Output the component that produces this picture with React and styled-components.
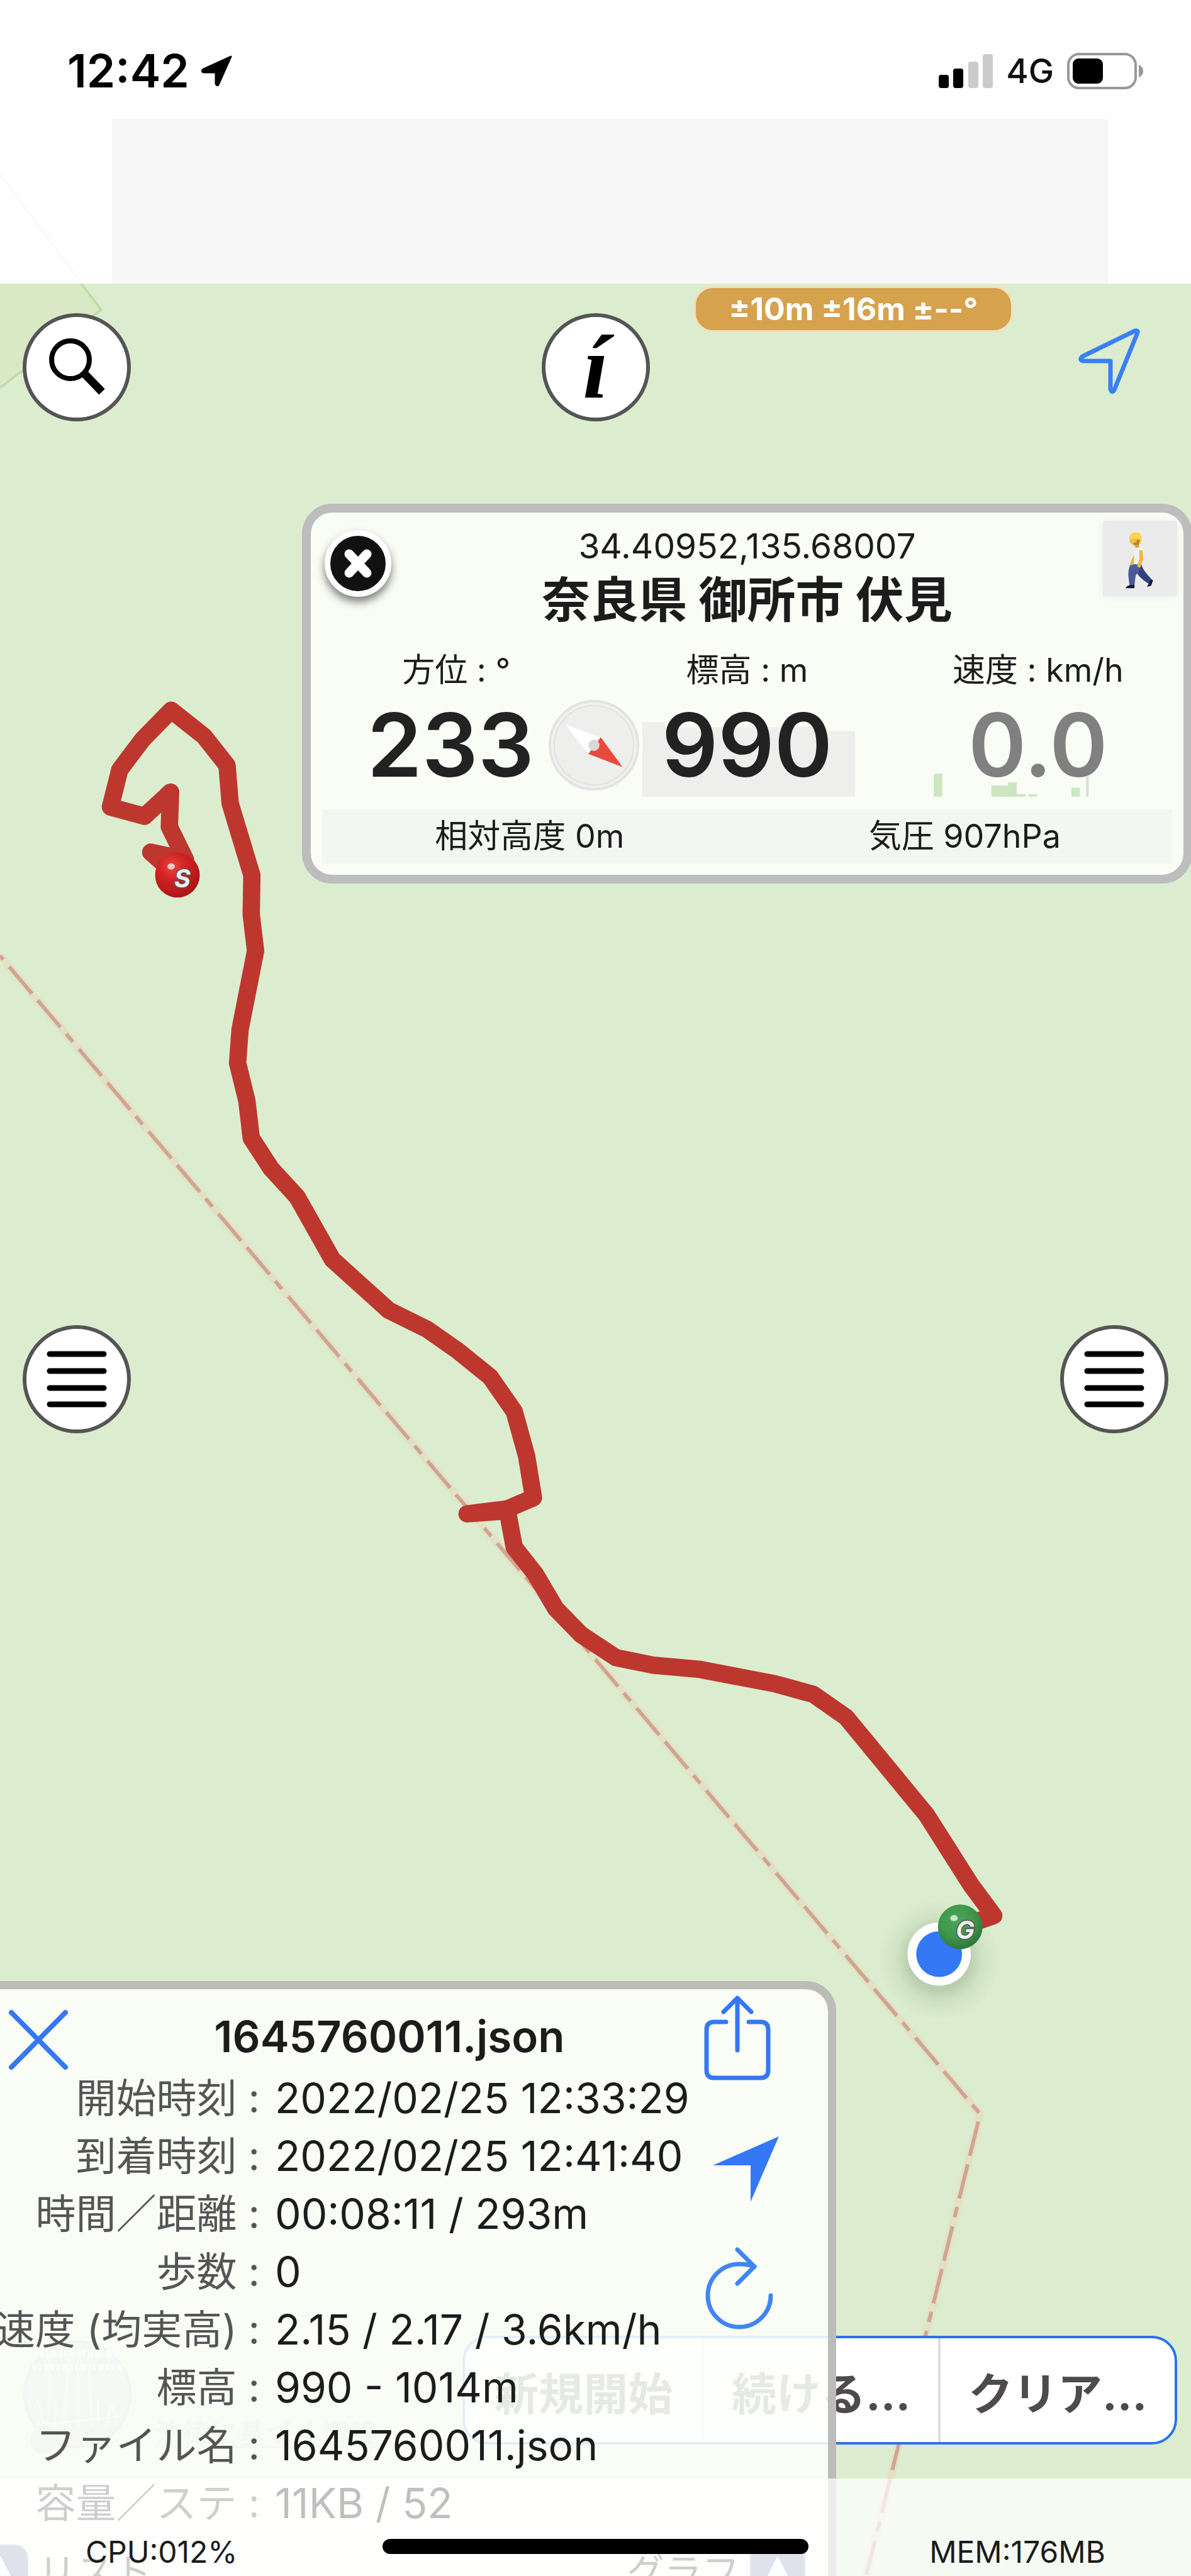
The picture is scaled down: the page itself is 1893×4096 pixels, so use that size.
import styled, { createGlobalStyle } from 'styled-components';

const GlobalStyle = createGlobalStyle`
  * {
    box-sizing: border-box;
  }
  body {
    margin: 0;
    background: #fefefe;
    font-family: Inter, "Noto Sans CJK JP", sans-serif;
    color: #1c1c1c;
  }
  button {
    font-family: inherit;
    padding: 0;
    border: 0;
    background: none;
    color: inherit;
    cursor: pointer;
  }
  svg {
    display: block;
  }
`;

const Screen = styled.div`
  display: flex;
  flex-direction: column;
  position: relative;
  height: 100vh;
  overflow: hidden;
`;

const StatusBar = styled.header`
  display: flex;
  flex: none;
  justify-content: space-between;
  align-items: center;
  height: 190px;
  padding: 36px 75px 0 107px;
`;

const StatusGroup = styled.div`
  display: flex;
  align-items: center;
  gap: ${(props) => props.$gap}px;
`;

const Clock = styled.time`
  font-size: 73px;
  font-weight: 600;
  line-height: 80px;
  color: #000;
`;

const Network = styled.span`
  font-size: 54px;
  font-weight: 500;
  line-height: 60px;
  color: #111;
`;

const HeaderLine = styled.svg`
  position: absolute;
  left: 0;
  top: 276px;
`;

const Banner = styled.div`
  flex: none;
  height: 260px;
  margin: 0 132px 1px 178px;
  background: #f6f6f6;
`;

const MapArea = styled.main`
  display: flex;
  flex: 1;
  flex-direction: column;
  position: relative;
  min-height: 0;
  overflow: hidden;
  background: #dcedcf;
`;

const MapCanvas = styled.svg`
  position: absolute;
  inset: 0;
  width: 100%;
  height: 100%;
`;

const TopControls = styled.div`
  display: grid;
  grid-template-columns: 1fr 172px 1fr;
  position: relative;
  padding: 47px 36px 0;
`;

const Accuracy = styled.div`
  position: absolute;
  top: 4px;
  left: calc(50% + 156px);
  padding: 0 53px;
  border: 3px solid #f4dfbb;
  border-radius: 30px;
  background: #d6a24e;
  color: #fff;
  font-size: 50px;
  font-weight: 700;
  line-height: 67px;
  white-space: nowrap;
`;

const RoundButton = styled.button`
  display: flex;
  align-items: center;
  justify-content: center;
  width: 172px;
  height: 172px;
  border: 6px solid #555;
  border-radius: 50%;
  background: #fff;
`;

const PlainButton = styled.button`
  justify-self: end;
  width: 172px;
  height: 172px;
`;

const InfoMark = styled.span`
  font-family: "Liberation Serif", serif;
  font-size: 144px;
  font-style: italic;
  font-weight: 700;
  line-height: 152px;
  color: #000;
`;

const InfoPanel = styled.section`
  position: relative;
  margin: 131px -2px 0 480px;
  padding: 20px 18px 18px;
  border: 14px solid #bdbdbd;
  border-radius: 48px;
  background: rgba(253, 255, 252, 0.88);
  background-clip: padding-box;
  text-align: center;
`;

const ClosePanel = styled.button`
  position: absolute;
  left: 22px;
  top: 28px;
  width: 106px;
  height: 106px;
  border: 9px solid #fff;
  border-radius: 50%;
  background: #111;
  box-shadow: 0 8px 14px rgba(0, 0, 0, 0.5);
  svg {
    margin: auto;
  }
`;

const WalkButton = styled.button`
  position: absolute;
  right: 10px;
  top: 13px;
  width: 118px;
  height: 120px;
  background: #ebebeb;
  box-shadow: 0 0 10px #ebebeb;
`;

const Coordinates = styled.div`
  font-size: 55px;
  line-height: 66px;
`;

const Place = styled.h1`
  margin: 0 0 24px;
  font-size: 77px;
  font-weight: 700;
  line-height: 106px;
`;

const Readings = styled.div`
  display: grid;
  grid-template-columns: repeat(3, 1fr);
  margin: 0 -18px 20px;
`;

const Reading = styled.div`
  position: relative;
`;

const ReadingLabel = styled.div`
  font-size: 52px;
  line-height: 70px;
`;

const ReadingValue = styled.div`
  position: relative;
  padding-right: ${(props) => props.$inset || 0}px;
  font-size: 140px;
  font-weight: 600;
  line-height: 166px;
  color: ${(props) => props.$color || '#222'};
`;

const Chart = styled.svg`
  position: absolute;
  bottom: 0;
  left: calc(50% - 166px);
`;

const Compass = styled.svg`
  position: absolute;
  right: -60px;
  bottom: 10px;
  z-index: 1;
`;

const PanelFooter = styled.div`
  display: grid;
  grid-template-columns: 1fr 1fr;
  column-gap: 32px;
  background: #f3f7f2;
  font-size: 52px;
  line-height: 86px;
`;

const SideControls = styled.div`
  display: flex;
  justify-content: space-between;
  position: relative;
  margin-top: 702px;
  padding: 0 36px;
`;

const Attribution = styled.div`
  position: absolute;
  left: 36px;
  bottom: 186px;
  display: flex;
  align-items: flex-end;
  svg {
    flex: none;
  }
`;

const Legal = styled.a`
  margin: 0 0 12px 36px;
  color: #c4c4c4;
  font-size: 44px;
  font-weight: 700;
  line-height: 56px;
`;

const Toolbar = styled.div`
  display: grid;
  grid-template-columns: repeat(3, 1fr);
  position: absolute;
  right: 22px;
  bottom: 209px;
  width: 60%;
  height: 173px;
  border: 4px solid #2a72ee;
  border-radius: 40px;
  background: #fff;
`;

const ToolbarButton = styled.button`
  font-size: 71px;
  font-weight: 700;
  color: #4f4a4c;
  & + & {
    border-left: 4px solid #ddd;
  }
`;

const TrackPanel = styled.section`
  position: relative;
  width: calc(75% + 1px);
  flex: none;
  margin: 871px 0 0 -92px;
  border: 13px solid #bcbcb9;
  border-radius: 48px;
  background: rgba(253, 255, 252, 0.88);
  background-clip: padding-box;
`;

const TrackHeader = styled.div`
  display: grid;
  grid-template-columns: 1fr auto 1fr;
  align-items: start;
  height: 127px;
  padding: 10px 91px 0 92px;
  > :last-child {
    justify-self: end;
  }
`;

const TrackTitle = styled.h2`
  margin: 0;
  font-size: 69px;
  font-weight: 600;
  line-height: 130px;
`;

const TrackBody = styled.div`
  display: flex;
  justify-content: space-between;
  padding-right: 75px;
`;

const TrackDetails = styled.dl`
  display: grid;
  grid-template-columns: 492px auto;
  column-gap: 24px;
  margin: 0;
  line-height: 92px;
  white-space: nowrap;
`;

const Term = styled.dt`
  text-align: right;
  font-size: 64px;
  color: #555;
`;

const Detail = styled.dd`
  margin: 0;
  font-size: 66px;
`;

const TrackActions = styled.div`
  display: flex;
  flex-direction: column;
  gap: 72px;
  width: 122px;
  padding-top: 107px;
`;

const TrackLinks = styled.div`
  display: flex;
  justify-content: space-between;
  margin-top: 14px;
  padding: 0 36px;
`;

const TrackLink = styled.button`
  display: flex;
  align-items: center;
  gap: 16px;
  color: #555;
  font-size: 60px;
  line-height: 100px;
`;

const Tile = styled.span`
  display: flex;
  align-items: center;
  justify-content: center;
  width: 88px;
  height: 88px;
  border: 3px solid #99a5c0;
  border-radius: 22px;
  background: #8b98b8;
`;

const BottomBar = styled.footer`
  display: grid;
  grid-template-columns: 1fr 677px 1fr;
  align-items: start;
  position: absolute;
  left: 0;
  right: 0;
  bottom: 0;
  height: 155px;
  padding-top: 85px;
  background: rgba(255, 255, 255, 0.72);
  font-size: 48px;
  line-height: 64px;
`;

const Usage = styled.span`
  justify-self: ${(props) => props.$side};
  padding: 0 136px;
`;

const HomeIndicator = styled.div`
  height: 24px;
  margin-top: 11px;
  border-radius: 12px;
  background: #000;
`;

const track = [
  [286, 1412], [243, 1374], [299, 1386], [273, 1333], [275, 1277], [233, 1316],
  [178, 1301], [193, 1241], [230, 1192], [276, 1145], [329, 1187], [366, 1234],
  [371, 1295], [406, 1411], [405, 1475], [412, 1533], [387, 1660], [383, 1714],
  [398, 1775], [405, 1835], [437, 1884], [479, 1930], [536, 2031], [627, 2113],
  [688, 2143], [738, 2178], [790, 2220], [829, 2276], [849, 2348], [860, 2415],
  [818, 2433], [753, 2441], [818, 2436], [829, 2495], [863, 2538], [896, 2594],
  [937, 2636], [993, 2673], [1053, 2685], [1129, 2692], [1249, 2715],
  [1311, 2732], [1364, 2769], [1494, 2927], [1565, 3039], [1602, 3089],
  [1550, 3107],
];

const details = [
  ['開始時刻', '2022/02/25 12:33:29'],
  ['到着時刻', '2022/02/25 12:41:40'],
  ['時間／距離', '00:08:11 / 293m'],
  ['歩数', '0'],
  ['速度 (均実高)', '2.15 / 2.17 / 3.6km/h'],
  ['標高', '990 - 1014m'],
  ['ファイル名', '1645760011.json'],
  ['容量／ステ', '11KB / 52'],
];

const Pin = ({ x, y, label, fill }) => (
  <g>
    <circle cx={x} cy={y} r="36" fill={`url(#${fill})`} />
    <ellipse cx={x - 10} cy={y - 14} rx="6" ry="5" fill="#fff" opacity="0.7" />
    <text
      x={x + 8}
      y={y + 20}
      textAnchor="middle"
      fontFamily="Inter, sans-serif"
      fontSize="40"
      fontWeight="700"
      fontStyle="italic"
      fill="#eee"
      stroke="#555"
      strokeWidth="3"
      paintOrder="stroke"
    >
      {label}
    </text>
  </g>
);

const Map = () => (
  <MapCanvas viewBox="0 457 1920 3698" preserveAspectRatio="xMidYMin slice">
    <defs>
      <radialGradient id="startPin" cx="0.38" cy="0.3" r="0.75">
        <stop offset="0" stopColor="#e8463f" />
        <stop offset="0.4" stopColor="#d32222" />
        <stop offset="1" stopColor="#a91318" />
      </radialGradient>
      <radialGradient id="goalPin" cx="0.42" cy="0.35" r="0.75">
        <stop offset="0" stopColor="#4aa457" />
        <stop offset="0.5" stopColor="#3f984b" />
        <stop offset="1" stopColor="#2a6b35" />
      </radialGradient>
      <radialGradient id="dotShadow">
        <stop offset="0.5" stopColor="#456040" stopOpacity="0.22" />
        <stop offset="0.7" stopColor="#456040" stopOpacity="0.08" />
        <stop offset="1" stopColor="#456040" stopOpacity="0" />
      </radialGradient>
    </defs>
    <path d="M0 457H131L163 499L0 625Z" fill="#d9e9c6" />
    <path d="M131 457L163 499L0 625" fill="none" stroke="#bfdca8" strokeWidth="4" />
    <g fill="none">
      <path d="M0 1541L1580 3409L1395 4160" stroke="#e6dcc0" strokeWidth="13" opacity="0.7" />
      <path
        d="M0 1541L1580 3409L1395 4160"
        stroke="#cfa591"
        strokeWidth="6"
        strokeDasharray="57 14 57 14 17 15"
        strokeDashoffset="151"
      />
    </g>
    <polyline
      points={track.join(' ')}
      fill="none"
      stroke="#bd372f"
      strokeWidth="28"
      strokeLinecap="round"
      strokeLinejoin="round"
    />
    <circle cx="1514" cy="3160" r="98" fill="url(#dotShadow)" />
    <circle cx="1514" cy="3151" r="51" fill="#fff" />
    <circle cx="1514" cy="3151" r="37" fill="#3478f6" />
    <Pin x={286} y={1411} label="S" fill="startPin" />
    <Pin x={1548} y={3107} label="G" fill="goalPin" />
  </MapCanvas>
);

const MenuButton = ({ label }) => (
  <RoundButton aria-label={label}>
    <svg width="96" height="92" viewBox="0 0 96 92" stroke="#000" strokeWidth="9" strokeLinecap="round">
      <path d="M5 6H91M5 33H91M5 60H91M5 86H91" />
    </svg>
  </RoundButton>
);

const Walker = () => (
  <svg width="118" height="120" viewBox="0 0 120 120">
    <path d="M62 69Q64 79 80 95L74 101Q56 90 51 76Z" fill="#33427c" />
    <path d="M45 69L63 70Q60 82 53 87L51 104H43L41 87Q41 76 45 69Z" fill="#4a5b97" />
    <path d="M37 107Q41 102 51 103V108H37ZM78 94L81 95L78 104L71 106Z" fill="#161a33" />
    <path d="M53 50L46 62L44 71L48 71L55 58Z" fill="#efb53d" />
    <path d="M53 41Q59 37 64 42L66 69H50Q50 53 53 41Z" fill="#f1f1f6" />
    <path d="M59 46L64 47L65 62L60 75L55 73L59 61Z" fill="#f0b73f" />
    <path d="M49 33L56 32L59 42L53 43Z" fill="#e0a233" />
    <circle cx="52" cy="30" r="9" fill="#f0bd48" />
    <path d="M42 26Q47 16 57 18Q65 21 62 35L56 38L54 28L44 29Z" fill="#fbd44d" />
    <path d="M55 29L60 30L58 38L51 39L49 35L54 34Z" fill="#b9832c" />
  </svg>
);

const App = () => (
  <>
    <GlobalStyle />
    <Screen>
      <StatusBar>
        <StatusGroup $gap={18}>
          <Clock>12:42</Clock>
          <svg width="50" height="50" viewBox="0 0 50 50">
            <path d="M48 2L28 47Q25 49 24 45V27H5Q0 26 4 22Z" fill="#000" stroke="#000" strokeWidth="3" strokeLinejoin="round" />
          </svg>
        </StatusGroup>
        <StatusGroup $gap={21}>
          <svg width="86" height="54" viewBox="0 0 86 54">
            <rect y="33" width="16" height="21" rx="4" fill="#000" />
            <rect x="23" y="23" width="16" height="31" rx="4" fill="#000" />
            <rect x="47" y="12" width="16" height="42" rx="4" fill="#cbcbcb" />
            <rect x="70" width="16" height="54" rx="4" fill="#cbcbcb" />
          </svg>
          <Network>4G</Network>
          <svg width="122" height="58" viewBox="0 0 122 58">
            <rect x="2" y="2" width="107" height="54" rx="17" fill="none" stroke="#999" strokeWidth="4" />
            <rect x="9" y="9" width="48" height="40" rx="9" fill="#000" />
            <path d="M114 19Q121 22 121 29T114 39Z" fill="#999" />
          </svg>
        </StatusGroup>
      </StatusBar>
      <HeaderLine width="130" height="175">
        <path d="M0 0L130 175" stroke="#fafbfa" strokeWidth="4" />
      </HeaderLine>
      <Banner />

      <MapArea>
        <Map />
        <TopControls>
          <RoundButton aria-label="検索">
            <svg width="106" height="106" viewBox="0 0 106 106" fill="none" stroke="#000">
              <circle cx="43" cy="41" r="30" strokeWidth="8" />
              <path d="M65 63L93 92" strokeWidth="13" />
            </svg>
          </RoundButton>
          <RoundButton aria-label="情報">
            <InfoMark>í</InfoMark>
          </RoundButton>
          <PlainButton aria-label="現在地">
            <svg width="172" height="172" viewBox="0 0 172 172">
              <path
                d="M123 31L86 122Q82 128 80 121V76H36Q30 74 35 69L119 28Q124 27 123 31Z"
                fill="none"
                stroke="#3880f5"
                strokeWidth="7"
                strokeLinejoin="round"
              />
            </svg>
          </PlainButton>
          <Accuracy>±10m ±16m ±--°</Accuracy>
        </TopControls>

        <InfoPanel>
          <ClosePanel aria-label="閉じる">
            <svg width="88" height="88" viewBox="0 0 88 88">
              <path d="M30 29L58 59M58 29L30 59" stroke="#fff" strokeWidth="15" strokeLinecap="round" />
            </svg>
          </ClosePanel>
          <WalkButton aria-label="徒歩">
            <Walker />
          </WalkButton>
          <Coordinates>34.40952,135.68007</Coordinates>
          <Place>奈良県 御所市 伏見</Place>
          <Readings>
            <Reading>
              <ReadingLabel>方位 : °</ReadingLabel>
              <ReadingValue $inset={18}>233</ReadingValue>
              <Compass width="144" height="144" viewBox="0 0 146 146">
                <circle cx="73" cy="73" r="71" fill="#f0f1ee" stroke="#e3e4e1" strokeWidth="4" />
                <circle cx="73" cy="73" r="64" fill="#eeefec" stroke="#e0e0de" strokeWidth="2" />
                <path d="M27 39L84 61L64 87Z" fill="#fff" />
                <path d="M84 60L119 108L64 87Z" fill="#ea4a3b" />
                <circle cx="73" cy="73" r="9" fill="#d9d9d7" />
              </Compass>
            </Reading>
            <Reading>
              <Chart width="338" height="119" viewBox="0 0 343 120">
                <path d="M0 0H37V8H275V14H343V120H0Z" fill="#eeeeec" />
              </Chart>
              <ReadingLabel>標高 : m</ReadingLabel>
              <ReadingValue>990</ReadingValue>
            </Reading>
            <Reading>
              <Chart width="338" height="119" viewBox="0 0 343 120">
                <path
                  d="M0 83H14V120H0ZM93 102H120V97H134V116H148V120H93ZM153 116H167V120H153ZM222 106H236V120H222ZM246 88H250V120H246Z"
                  fill="#cbe6c0"
                />
              </Chart>
              <ReadingLabel>速度 : km/h</ReadingLabel>
              <ReadingValue $color="#808080">0.0</ReadingValue>
            </Reading>
          </Readings>
          <PanelFooter>
            <span>相対高度 0m</span>
            <span>気圧 907hPa</span>
          </PanelFooter>
        </InfoPanel>

        <SideControls>
          <MenuButton label="左メニュー" />
          <MenuButton label="右メニュー" />
        </SideControls>

        <Attribution>
          <svg width="174" height="190" viewBox="0 0 174 190">
            <circle cx="87" cy="87" r="84" fill="#c2c0c4" stroke="#aaa" strokeWidth="4" />
            <path
              d="M28 22H148M16 44H158"
              stroke="#fff"
              strokeWidth="10"
              strokeDasharray="6 3 4 5 8 3"
            />
            <path
              d="M20 110Q22 80 28 110L34 140M40 140L44 20M64 140L74 30M90 140L88 24M110 140L104 28M132 140L142 100L150 132M52 100V140M120 96V136"
              fill="none"
              stroke="#dcdbe2"
              strokeWidth="4"
            />
            <path d="M22 136Q90 130 156 122" stroke="#f4e8a8" strokeWidth="3" fill="none" />
            <circle cx="34" cy="160" r="22" fill="#bdb9b0" />
          </svg>
          <Legal href="#legal">法律に基づく情報</Legal>
        </Attribution>

        <Toolbar>
          <ToolbarButton>新規開始</ToolbarButton>
          <ToolbarButton>続ける...</ToolbarButton>
          <ToolbarButton>クリア...</ToolbarButton>
        </Toolbar>

        <TrackPanel>
          <TrackHeader>
            <button aria-label="閉じる">
              <svg width="96" height="140" viewBox="0 0 96 140" stroke="#3478f6" strokeWidth="8" strokeLinecap="round">
                <path d="M5 27L91 114M91 27L5 114" />
              </svg>
            </button>
            <TrackTitle>1645760011.json</TrackTitle>
            <button aria-label="共有">
              <svg
                width="106"
                height="136"
                viewBox="0 0 106 136"
                fill="none"
                stroke="#3478f6"
                strokeWidth="7"
                strokeLinecap="round"
                strokeLinejoin="round"
              >
                <path d="M35 42H16Q4 42 4 54V119Q4 131 16 131H90Q102 131 102 119V54Q102 42 90 42H71" />
                <path d="M53 87V4M31 26L53 4L75 26" />
              </svg>
            </button>
          </TrackHeader>
          <TrackBody>
            <TrackDetails>
              {details.map(([term, value]) => [
                <Term key={term}>{term} :</Term>,
                <Detail key={`${term}-value`}>{value}</Detail>,
              ])}
            </TrackDetails>
            <TrackActions>
              <button aria-label="ナビ">
                <svg width="122" height="104" viewBox="0 0 122 104">
                  <path d="M119 0L74 104V46H14Z" fill="#3478f6" />
                </svg>
              </button>
              <button aria-label="更新">
                <svg
                  width="122"
                  height="132"
                  viewBox="0 0 122 132"
                  fill="none"
                  stroke="#3f86f4"
                  strokeWidth="7"
                  strokeLinecap="round"
                  strokeLinejoin="round"
                >
                  <path d="M106 77A50 50 0 1 1 56 27Q70 27 80 31" />
                  <path d="M53 4L80 31L53 58" />
                </svg>
              </button>
            </TrackActions>
          </TrackBody>
          <TrackLinks>
            <TrackLink>
              <Tile>
                <svg width="60" height="60" viewBox="0 0 60 60">
                  <path d="M30 4L58 60H2Z" fill="#fff" />
                </svg>
              </Tile>
              リスト
            </TrackLink>
            <TrackLink>
              グラフ
              <Tile>
                <svg width="60" height="60" viewBox="0 0 60 60">
                  <path d="M30 4L58 60H2Z" fill="#fff" />
                </svg>
              </Tile>
            </TrackLink>
          </TrackLinks>
        </TrackPanel>

        <BottomBar>
          <Usage $side="start">CPU:012%</Usage>
          <HomeIndicator />
          <Usage $side="end">MEM:176MB</Usage>
        </BottomBar>
      </MapArea>
    </Screen>
  </>
);

export default App;
